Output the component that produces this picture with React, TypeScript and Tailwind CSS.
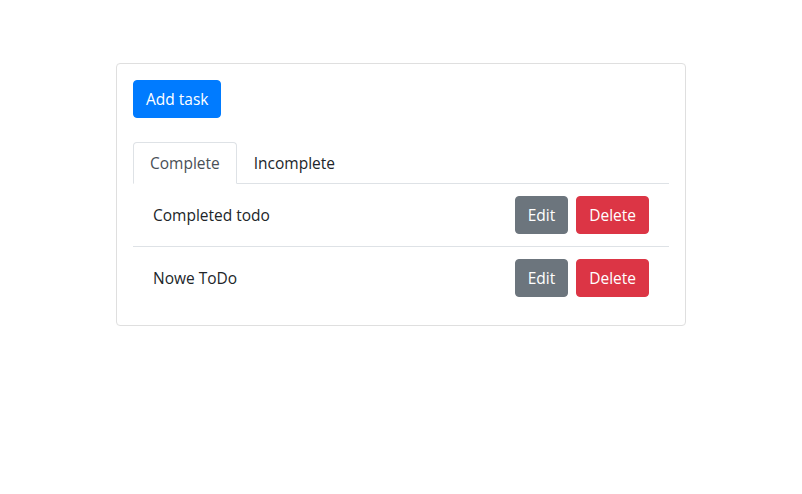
const todos = [
  { id: 1, title: "Completed todo" },
  { id: 2, title: "Nowe ToDo" },
];

export default function App() {
  return (
    <div className="min-h-screen bg-white pt-[63px] font-['Open_Sans',sans-serif] text-[15.5px] leading-6 text-[#212529]">
      <div className="mx-auto w-[570px] rounded border border-[#dfdfdf] bg-white p-4">
        <button className="rounded border border-[#007bff] bg-[#007bff] px-3 py-1.5 text-white">
          Add task
        </button>

        <div className="mt-6 flex border-b border-[#dee2e6]">
          <div className="-mb-px rounded-t border border-[#dee2e6] border-b-white bg-white px-4 py-2 text-[#495057]">
            Complete
          </div>
          <div className="-mb-px border border-transparent px-4 py-2 text-[#212529]">
            Incomplete
          </div>
        </div>

        <ul>
          {todos.map((t, i) => (
            <li
              key={t.id}
              className={
                i < todos.length - 1
                  ? "flex items-center justify-between border-b border-[#dee2e6] px-5 py-3"
                  : "flex items-center justify-between px-5 py-3"
              }
            >
              <span>{t.title}</span>
              <div className="flex gap-2">
                <button className="rounded border border-[#6c757d] bg-[#6c757d] px-3 py-1.5 text-white">
                  Edit
                </button>
                <button className="rounded border border-[#dc3545] bg-[#dc3545] px-3 py-1.5 text-white">
                  Delete
                </button>
              </div>
            </li>
          ))}
        </ul>
      </div>
    </div>
  );
}
